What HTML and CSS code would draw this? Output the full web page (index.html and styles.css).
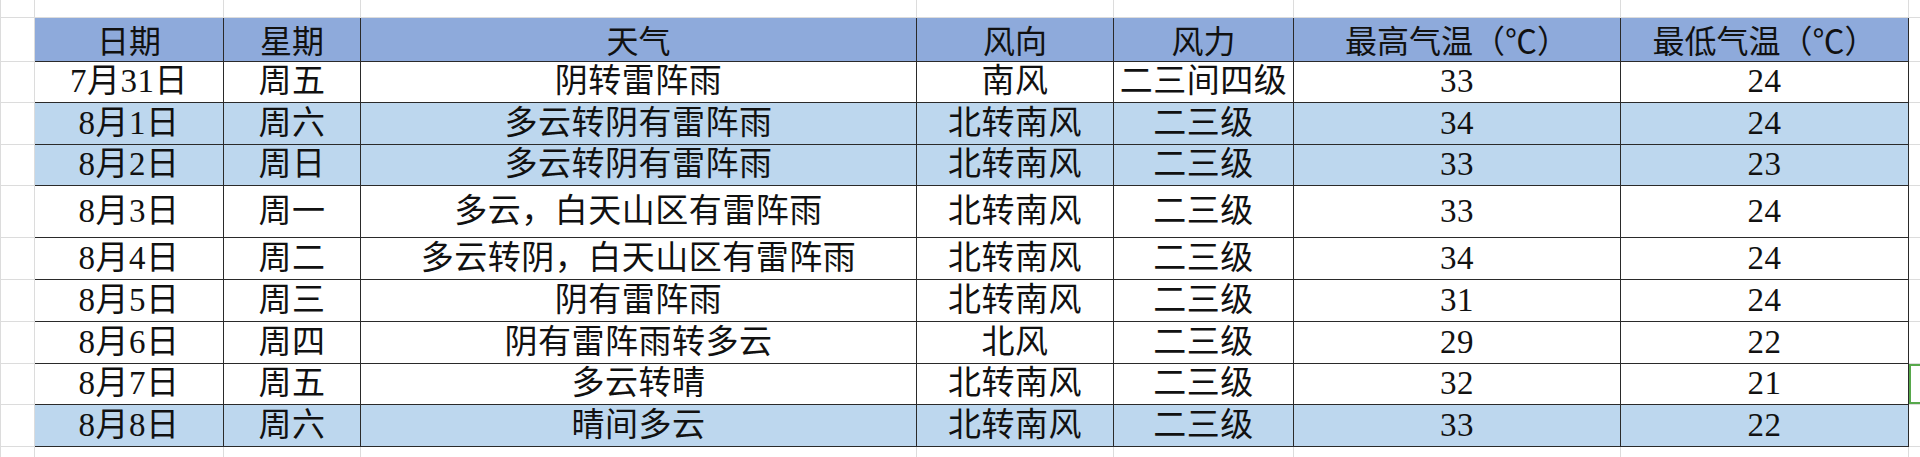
FILE: index.html
```html
<!DOCTYPE html>
<html lang="zh-CN">
<head>
<meta charset="utf-8">
<title>天气预报</title>
<link rel="stylesheet" href="styles.css">
</head>
<body>
<table class="sheet">
  <colgroup>
    <col class="c-gut"><col class="c-date"><col class="c-week"><col class="c-weather"><col class="c-dir"><col class="c-force"><col class="c-hi"><col class="c-lo"><col class="c-rest">
  </colgroup>
  <tr class="r-top"><td class="g"></td><td class="g"></td><td class="g"></td><td class="g"></td><td class="g"></td><td class="g"></td><td class="g"></td><td class="g"></td><td class="g"></td></tr>
  <tr class="r-head"><td class="g"></td><th>日期</th><th>星期</th><th>天气</th><th>风向</th><th>风力</th><th>最高气温（℃）</th><th>最低气温（℃）</th><td class="g"></td></tr>
  <tr class="r41"><td class="g"></td><td>7月31日</td><td>周五</td><td>阴转雷阵雨</td><td>南风</td><td>二三间四级</td><td>33</td><td>24</td><td class="g"></td></tr>
  <tr class="r42 blue"><td class="g"></td><td>8月1日</td><td>周六</td><td>多云转阴有雷阵雨</td><td>北转南风</td><td>二三级</td><td>34</td><td>24</td><td class="g"></td></tr>
  <tr class="r41 blue"><td class="g"></td><td>8月2日</td><td>周日</td><td>多云转阴有雷阵雨</td><td>北转南风</td><td>二三级</td><td>33</td><td>23</td><td class="g"></td></tr>
  <tr class="r52"><td class="g"></td><td>8月3日</td><td>周一</td><td>多云，白天山区有雷阵雨</td><td>北转南风</td><td>二三级</td><td>33</td><td>24</td><td class="g"></td></tr>
  <tr class="r42"><td class="g"></td><td>8月4日</td><td>周二</td><td>多云转阴，白天山区有雷阵雨</td><td>北转南风</td><td>二三级</td><td>34</td><td>24</td><td class="g"></td></tr>
  <tr class="r42"><td class="g"></td><td>8月5日</td><td>周三</td><td>阴有雷阵雨</td><td>北转南风</td><td>二三级</td><td>31</td><td>24</td><td class="g"></td></tr>
  <tr class="r42"><td class="g"></td><td>8月6日</td><td>周四</td><td>阴有雷阵雨转多云</td><td>北风</td><td>二三级</td><td>29</td><td>22</td><td class="g"></td></tr>
  <tr class="r41"><td class="g"></td><td>8月7日</td><td>周五</td><td>多云转晴</td><td>北转南风</td><td>二三级</td><td>32</td><td>21</td><td class="g sel"></td></tr>
  <tr class="r42 blue"><td class="g"></td><td>8月8日</td><td>周六</td><td>晴间多云</td><td>北转南风</td><td>二三级</td><td>33</td><td>22</td><td class="g"></td></tr>
  <tr class="r-bottom"><td class="g"></td><td class="g"></td><td class="g"></td><td class="g"></td><td class="g"></td><td class="g"></td><td class="g"></td><td class="g"></td><td class="g"></td></tr>
</table>
</body>
</html>
```

FILE: styles.css
```css
html, body {
  margin: 0;
  padding: 0;
  background: #ffffff;
  overflow: hidden;
}

.sheet {
  border-collapse: collapse;
  table-layout: fixed;
  width: 1960px;
  font-family: "Liberation Serif", "Noto Sans CJK SC", serif;
  color: #111111;
}

.c-gut { width: 34px; }
.c-date { width: 189px; }
.c-week { width: 137px; }
.c-weather { width: 556px; }
.c-dir { width: 197px; }
.c-force { width: 180px; }
.c-hi { width: 327px; }
.c-lo { width: 288px; }
.c-rest { width: 52px; }

.sheet td,
.sheet th {
  padding: 0;
  border: 1px solid #2a2a2a;
  text-align: center;
  vertical-align: middle;
  line-height: 1;
  font-size: 33px;
  font-weight: normal;
  white-space: nowrap;
  overflow: hidden;
  letter-spacing: 0.5px;
}

.sheet th {
  font-family: "Noto Sans CJK SC", sans-serif;
  font-size: 32px;
  letter-spacing: 0;
  background: #8eaadb;
}

.sheet td.g {
  border: 1px solid #dcdcdc;
  background: #ffffff;
}

.r-top { height: 17px; }
.r-head { height: 44px; }
.r41 { height: 41px; }
.r42 { height: 42px; }
.r52 { height: 52px; }
.r-bottom { height: 20px; }

.r-top td.g { border-top: none; }

.blue td { background: #bdd7ee; }

.sheet td.sel {
  box-shadow: inset 2px 2px 0 #57a84b, inset 0 -2px 0 #57a84b;
}
```
